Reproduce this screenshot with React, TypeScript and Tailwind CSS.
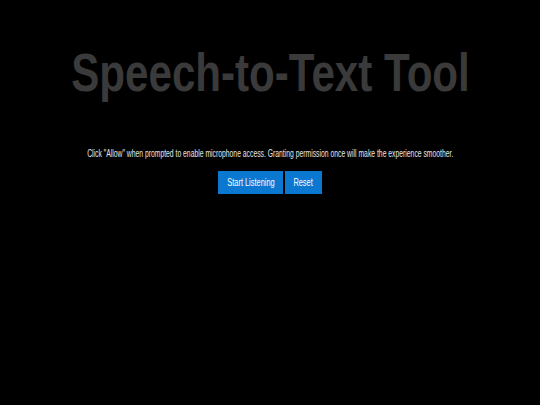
import React from 'react';

const FONT = { fontFamily: '"Liberation Sans", Arial, sans-serif' };

export default function App() {
    return (
        <div className="min-h-screen w-full bg-black flex flex-col items-center" style={FONT}>
            {/* Title */}
            <h1 className="mt-[45px] text-[54px] leading-none font-bold text-[#3a3a3a] whitespace-nowrap scale-x-[0.78]">
                Speech-to-Text Tool
            </h1>

            {/* Hint */}
            <p className="mt-[49px] text-[10px] leading-[12px] text-[#e6e6e6] whitespace-nowrap scale-x-[0.68]">
                Click "Allow" when prompted to enable microphone access. Granting permission once will make the experience smoother.
            </p>

            {/* Controls */}
            <div className="mt-[11px] flex gap-[2px]">
                <button className="w-[65px] h-[23px] bg-[#0a78d0] text-white text-[10px] flex items-center justify-center">
                    <span className="whitespace-nowrap scale-x-[0.74]">Start Listening</span>
                </button>
                <button className="w-[37px] h-[23px] bg-[#0a78d0] text-white text-[10px] flex items-center justify-center">
                    <span className="whitespace-nowrap scale-x-[0.74]">Reset</span>
                </button>
            </div>
        </div>
    );
}
